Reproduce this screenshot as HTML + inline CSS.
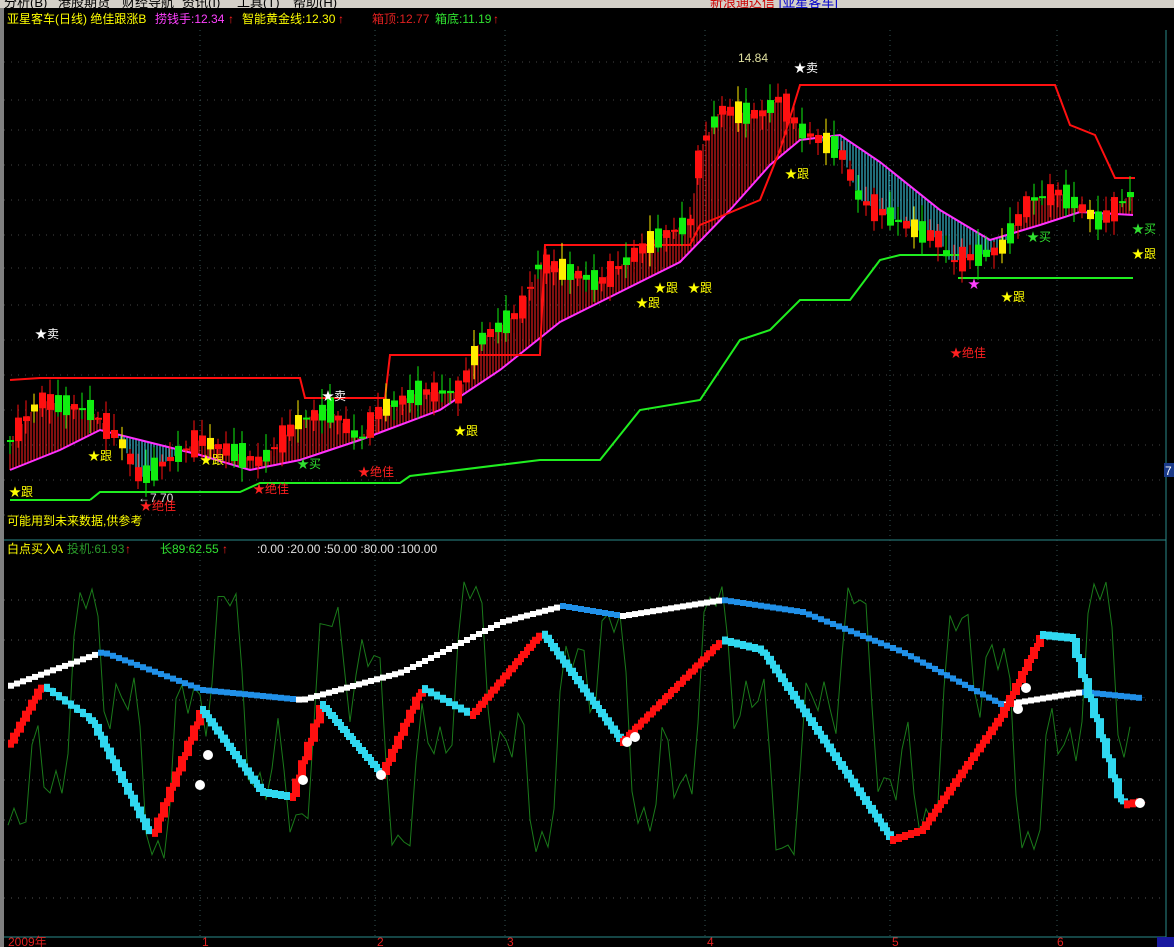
<!DOCTYPE html>
<html><head><meta charset="utf-8"><style>
html,body{margin:0;padding:0;background:#000;width:1174px;height:947px;overflow:hidden;font-family:"Liberation Sans","Noto Sans CJK SC",sans-serif}
#menu{position:absolute;left:0;top:0;width:1174px;height:8px;background:#d4d0c8;overflow:hidden}
#menu span{position:absolute;top:-8px;font-size:13px;color:#000}
svg{position:absolute;left:0;top:0}
text{font-family:"Liberation Sans","Noto Sans CJK SC",sans-serif;font-size:12px}
</style></head><body>
<svg id="s" width="1174" height="947" viewBox="0 0 1174 947">
<rect x="0" y="0" width="1174" height="947" fill="#000"/>
<rect x="0" y="8" width="4" height="939" fill="#808080"/>
<line x1="4" y1="540" x2="1166" y2="540" stroke="#2a8a8a" stroke-width="1"/>
<line x1="4" y1="937" x2="1166" y2="937" stroke="#2a8a8a" stroke-width="1"/>
<line x1="1166" y1="30" x2="1166" y2="937" stroke="#2a8a8a" stroke-width="1"/>
<g id="grid"></g>
<g id="shapes"></g>
<g font-size="12">
<text x="7" y="23" fill="#ffff00">亚星客车(日线) 绝佳跟涨B</text>
<text x="155" y="23" fill="#ff40ff">捞钱手:12.34</text><text x="228" y="23" fill="#ff2020">↑</text>
<text x="242" y="23" fill="#ffff00">智能黄金线:12.30</text><text x="338" y="23" fill="#ff2020">↑</text>
<text x="372" y="23" fill="#e02020">箱顶:12.77</text>
<text x="435" y="23" fill="#30e030">箱底:11.19</text><text x="493" y="23" fill="#ff2020">↑</text>
<text x="7" y="525" fill="#ffff00">可能用到未来数据,供参考</text>
<text x="7" y="553" fill="#ffff00">白点买入A</text>
<text x="67" y="553" fill="#2a9a2a">投机:61.93</text><text x="125" y="553" fill="#ff2020">↑</text>
<text x="160" y="553" fill="#30e030">长89:62.55</text><text x="222" y="553" fill="#ff2020">↑</text>
<text x="257" y="553" fill="#e0e0e0">:0.00 :20.00 :50.00 :80.00 :100.00</text>
<text x="8" y="946" fill="#e02020">2009年</text>
<text x="202" y="946" fill="#e02020">1</text><text x="377" y="946" fill="#e02020">2</text>
<text x="507" y="946" fill="#e02020">3</text><text x="707" y="946" fill="#e02020">4</text>
<text x="892" y="946" fill="#e02020">5</text><text x="1057" y="946" fill="#e02020">6</text>
<rect x="1157" y="937" width="17" height="10" fill="#1a1aa0"/>
<rect x="1164" y="463" width="10" height="14" fill="#1a3a8a"/><text x="1165" y="475" fill="#fff">7</text>
<text x="738" y="62" fill="#e0e0a0" font-size="11">14.84</text>
<text x="138" y="502" fill="#e0e0e0" font-size="11">←7.70</text>
<text x="35" y="338" fill="#fff" font-size="14">★卖</text>
<text x="322" y="400" fill="#fff" font-size="14">★卖</text>
<text x="794" y="72" fill="#fff" font-size="14">★卖</text>
<text x="9" y="496" fill="#ffff00" font-size="14">★跟</text>
<text x="88" y="460" fill="#ffff00" font-size="14">★跟</text>
<text x="200" y="464" fill="#ffff00" font-size="14">★跟</text>
<text x="454" y="435" fill="#ffff00" font-size="14">★跟</text>
<text x="636" y="307" fill="#ffff00" font-size="14">★跟</text>
<text x="654" y="292" fill="#ffff00" font-size="14">★跟</text>
<text x="688" y="292" fill="#ffff00" font-size="14">★跟</text>
<text x="785" y="178" fill="#ffff00" font-size="14">★跟</text>
<text x="1001" y="301" fill="#ffff00" font-size="14">★跟</text>
<text x="1132" y="258" fill="#ffff00" font-size="14">★跟</text>
<text x="297" y="468" fill="#30e030" font-size="14">★买</text>
<text x="1027" y="241" fill="#30e030" font-size="14">★买</text>
<text x="1132" y="233" fill="#30e030" font-size="14">★买</text>
<text x="968" y="288" fill="#ff40ff" font-size="14">★</text>
<text x="140" y="510" fill="#ff2020" font-size="14">★绝佳</text>
<text x="253" y="493" fill="#ff2020" font-size="14">★绝佳</text>
<text x="358" y="476" fill="#ff2020" font-size="14">★绝佳</text>
<text x="950" y="357" fill="#ff2020" font-size="14">★绝佳</text>
</g>
</svg>
<div id="menu"><span style="left:4px">分析(B)</span><span style="left:58px">港股期货</span><span style="left:122px">财经导航</span><span style="left:182px">资讯(I)</span><span style="left:237px">工具(T)</span><span style="left:293px">帮助(H)</span><span style="left:710px;color:#c00">新浪通达信 <span style="position:static;color:#00c">[亚星客车]</span></span></div>
<script>
(function(){
var NS="http://www.w3.org/2000/svg",S=document.getElementById('shapes'),G=document.getElementById('grid');
function el(p,t,a){var e=document.createElementNS(NS,t);for(var k in a)e.setAttribute(k,a[k]);p.appendChild(e);return e}
function interp(pts,x){for(var i=0;i<pts.length-1;i++){if(x<=pts[i+1][0]){var a=pts[i],b=pts[i+1];return a[1]+(b[1]-a[1])*(x-a[0])/(b[0]-a[0])}}return pts[pts.length-1][1]}
function pl(pts,c,w,p){el(p||S,'polyline',{points:pts.map(function(q){return q.join(',')}).join(' '),fill:'none',stroke:c,'stroke-width':w})}
[62,100,130,165,200,235,268,305,340,375,410,445,480,515].forEach(function(y){el(G,'line',{x1:4,y1:y,x2:1166,y2:y,stroke:'#444',"stroke-dasharray":"1,6"})});
[600,640,700,740,780,820,860,898].forEach(function(y){el(G,'line',{x1:4,y1:y,x2:1166,y2:y,stroke:'#555',"stroke-dasharray":"1,6"})});
[200,375,505,705,890,1057].forEach(function(x){el(G,'line',{x1:x,y1:30,x2:x,y2:937,stroke:'#335555',"stroke-dasharray":"1,4"})});
var price=[[10,440],[40,400],[90,410],[120,440],[140,478],[200,440],[260,462],[300,420],[330,410],[360,440],[380,410],[420,392],[460,392],[480,340],[520,312],[540,262],[600,282],[650,242],[690,222],[700,150],[720,110],[760,115],[780,98],[800,130],[840,150],[860,200],[900,222],[940,240],[950,262],[1000,250],[1030,200],[1060,192],[1100,222],[1135,190]];
var ma=[[10,470],[60,450],[100,430],[140,440],[200,455],[250,470],[300,460],[360,440],[440,410],[500,370],[560,322],[620,292],[680,262],[730,210],[770,165],[800,140],[840,135],[880,162],[940,210],[990,240],[1040,225],[1080,212],[1133,215]];
for(var x=10;x<1135;x+=3){var p=interp(price,x),m=interp(ma,x);el(S,'line',{x1:x,y1:p,x2:x,y2:m,stroke:p<m?'#ff2020':'#40d8f0','stroke-width':1})}
pl(ma,'#ff30ff',2);
pl([[10,380],[40,378],[300,378],[305,398],[385,398],[390,355],[540,355],[545,245],[690,245],[700,225],[760,200],[780,150],[800,85],[1055,85],[1070,125],[1095,135],[1115,178],[1135,178]],'#ff1010',2);
pl([[90,500],[100,492],[240,492],[260,483],[400,483],[410,476],[540,460],[600,460],[640,410],[700,400],[740,340],[770,330],[800,300],[850,300],[880,260],[900,255],[960,255]],'#20ee20',2);
pl([[958,278],[1133,278]],'#20ee20',2);
pl([[10,500],[90,500]],'#20ee20',2);
for(var i=0;i<141;i++){var x=10+i*8,p=interp(price,x);var d=Math.sin(i*1.7)*9+Math.sin(i*0.6)*5;var o=p+d,c=p-d;var col=d>0?'#ff1010':'#10ee10';if(i%11==3)col='#ffee00';
var hi=Math.min(o,c)-4-Math.abs(Math.sin(i*2.3))*12,lo=Math.max(o,c)+4+Math.abs(Math.cos(i*1.3))*10;
el(S,'line',{x1:x,y1:hi,x2:x,y2:lo,stroke:col});el(S,'rect',{x:x-3,y:Math.min(o,c),width:7,height:Math.max(2,Math.abs(o-c)),fill:col})}
var g=[];for(var x=8;x<1135;x+=6){var v=720+Math.sin(x*0.05)*90+Math.sin(x*0.13)*60+Math.sin(x*0.31)*30;g.push([x,Math.max(565,Math.min(925,v))])}
pl(g,'#1a7a1a',1);
function step(pts,w,fn){for(var x=8;x<1138;x+=6){var a=interp(pts,x),b=interp(pts,x+6);el(S,'line',{x1:x,y1:a,x2:x+6,y2:a,stroke:fn(a,b),'stroke-width':w});el(S,'line',{x1:x+6,y1:a,x2:x+6,y2:b,stroke:fn(a,b),'stroke-width':w})}}
var wl=[[10,685],[100,652],[200,690],[300,700],[400,672],[500,622],[560,606],[620,616],[720,600],[800,612],[900,652],[1000,705],[1080,692],[1138,698]];
step(wl,6,function(a,b){return b<=a?'#ffffff':'#2090e8'});
var rl=[[10,740],[40,685],[90,720],[150,838],[200,710],[260,792],[290,797],[320,705],[380,775],[420,688],[470,715],[540,632],[620,742],[720,640],[760,650],[890,840],[920,830],[1000,715],[1040,635],[1070,638],[1120,805],[1138,802]];
step(rl,8,function(a,b){return b<a?'#ff1010':'#30d8f0'});
[[208,755],[200,785],[303,780],[381,775],[627,742],[635,737],[1026,688],[1018,709],[1140,803]].forEach(function(q){el(S,'circle',{cx:q[0],cy:q[1],r:5,fill:'#fff'})});
})();
</script>
</body></html>
